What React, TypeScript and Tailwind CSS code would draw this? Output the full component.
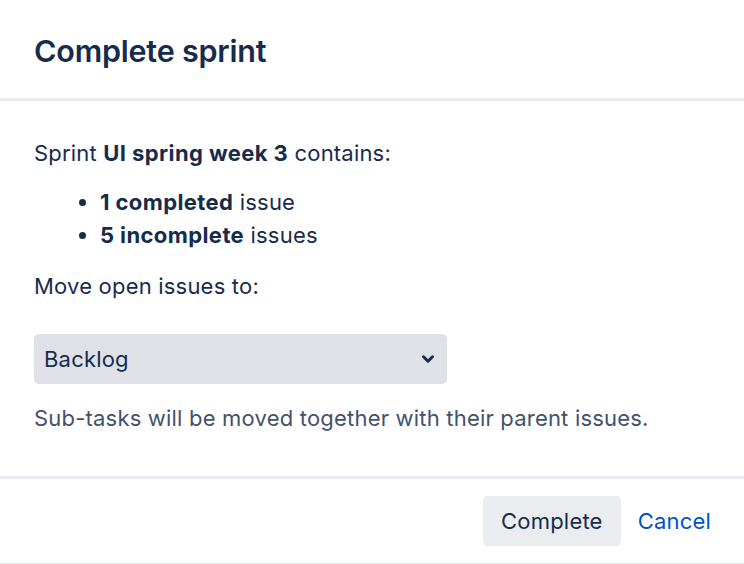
import { ChevronDown } from "lucide-react";

export default function App() {
    return (
        <div className="w-[744px] h-[564px] bg-white text-[#172b4d] flex flex-col" style={{ fontFamily: "Inter, 'Noto Sans', sans-serif" }}>
            {/* header */}
            <div className="h-[101px] flex items-center px-[34px] pt-[4px] border-b-[3px] border-[#ebecf0]">
                <h1 className="text-[30.5px] font-semibold tracking-[-0.2px]">Complete sprint</h1>
            </div>

            {/* body */}
            <div className="flex-1 px-[34px] pt-[36px] text-[22px] leading-[33px] tracking-[0.2px]">
                <p>
                    Sprint <strong className="font-bold tracking-[0.4px]">UI spring week 3</strong> contains:
                </p>
                <ul className="mt-[16px] pl-[66px] list-disc">
                    <li><strong className="font-bold tracking-[0.4px]">1 completed</strong> issue</li>
                    <li><strong className="font-bold tracking-[0.4px]">5 incomplete</strong> issues</li>
                </ul>
                <p className="mt-[18px]">Move open issues to:</p>
                <div className="mt-[31px] w-[413px] h-[50px] rounded-[5px] bg-[#dfe1e6] flex items-center justify-between pl-[10px] pr-[10px]">
                    <span>Backlog</span>
                    <ChevronDown className="w-[18px] h-[18px] text-[#172b4d]" strokeWidth={4} />
                </div>
                <p className="mt-[18px] text-[#42526e]">Sub-tasks will be moved together with their parent issues.</p>
            </div>

            {/* footer */}
            <div className="h-[88px] border-t-[3px] border-[#ebecf0] flex items-start justify-end gap-[8px] pt-[17px] pr-[24px] border-b border-b-[#e4e5e9]">
                <button className="h-[50px] px-[18px] rounded-[5px] bg-[#ebecf0] text-[22px] tracking-[0.2px] text-[#172b4d]">Complete</button>
                <button className="h-[50px] px-[9px] text-[22px] tracking-[0.2px] text-[#0052cc]">Cancel</button>
            </div>
        </div>
    );
}
